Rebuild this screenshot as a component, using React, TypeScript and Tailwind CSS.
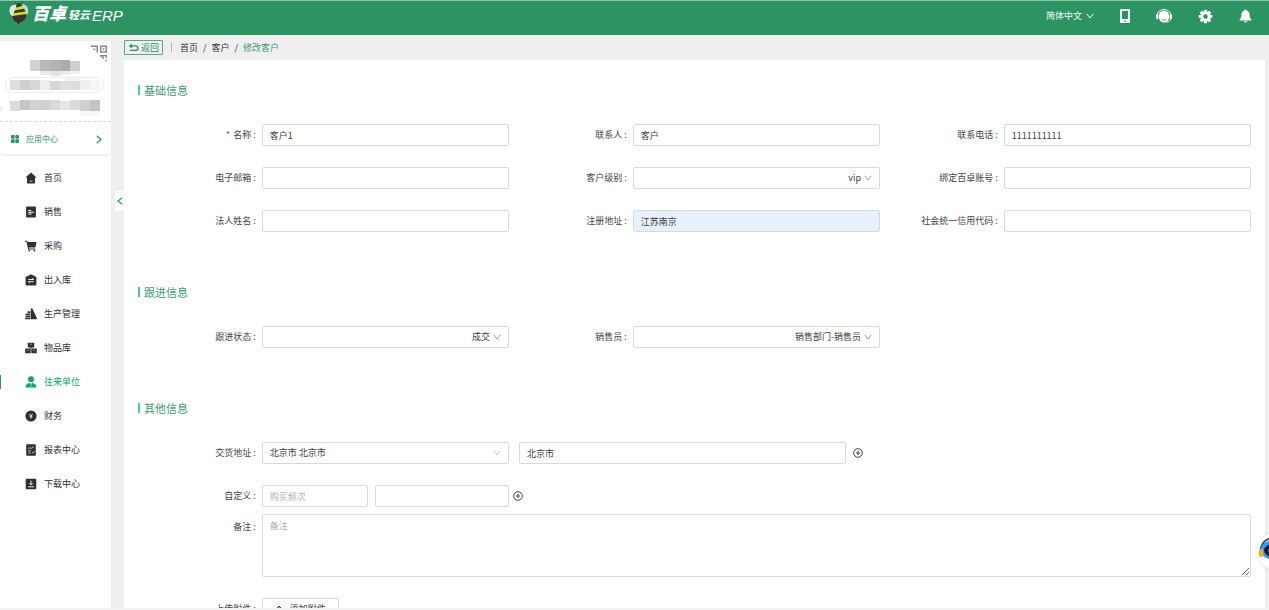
import React from 'react';

type IconProps = { className?: string };

/* ---------- Icons ---------- */

function Chevron({ className = '' }: IconProps) {
  return (
    <svg viewBox="0 0 8 6" className={className} fill="none" stroke="currentColor" strokeWidth="1" aria-hidden="true">
      <path d="M0.8 0.8 4 5 7.2 0.8" />
    </svg>
  );
}

function BeeLogo() {
  return (
    <svg viewBox="0 0 22 26" className="h-[25px] w-[22px] shrink-0" aria-hidden="true">
      <path d="M9 3.2 6.600 0.800M13 2.600 15 0.400" stroke="#333" strokeWidth="0.900" fill="none" />
      <path d="M8 4C3 3.500 0.300 7 1.200 11.500c.4 2.600 2 4 3.800 4.300L9 7Z" fill="#dfe8e4" />
      <path d="M14 3c4.500.3 7 3.600 6.600 8-.2 2.400-1.200 3.800-2.800 4.200L12 6Z" fill="#c9d6d0" />
      <path d="M10.800 2.400c2 0 3.200 1 3.800 2.600L8 7c0-2.600 1-4.600 2.800-4.600Z" fill="#33352f" />
      <path d="M7.600 7.200 14.600 5l1.600 3.400-9.600 1.900Z" fill="#d3df1b" />
      <path d="m6.500 10 9.900-1.900 1.400 3L5.400 13Z" fill="#33352f" />
      <path d="m5.200 12.800 12.800-2 .6 3.200L4.400 16Z" fill="#d3df1b" />
      <path d="M4.300 15.700 18.700 13.500c.4 5-3.200 7.800-6.600 8.600L10 25l-.6-2.700c-3.200-.6-5.400-3.200-5.100-6.600Z" fill="#3a3229" />
    </svg>
  );
}

function PhoneIcon() {
  return (
    <svg viewBox="0 0 10 14" className="h-[14px] w-[10px]" fill="currentColor" aria-hidden="true">
      <path fillRule="evenodd" d="M1 0h8q1 0 1 1v12q0 1-1 1H1q-1 0-1-1V1Q0 0 1 0ZM2 2v8h6V2ZM4 11.400v1.200h2v-1.200Z" />
    </svg>
  );
}

function ServiceIcon() {
  return (
    <svg viewBox="0 0 16 14" className="h-[14px] w-[16px]" fill="currentColor" aria-hidden="true">
      <path d="M1.200 6.500C1.400 2.600 4.400.6 8 .6s6.600 2 6.800 5.900" fill="none" stroke="currentColor" strokeWidth="1" />
      <rect x="0" y="5.300" width="2.200" height="4.900" rx="1" />
      <rect x="13.800" y="5.300" width="2.200" height="4.900" rx="1" />
      <path d="M8 1.800c3.200 0 5.300 2.200 5.300 5.400 0 3.600-2.200 6.300-5.300 6.300S2.700 10.800 2.700 7.200 4.800 1.800 8 1.800Z" />
      <path d="M5.800 10.300c1.300.9 3.100.9 4.400 0" fill="none" stroke="#2b9462" strokeWidth="0.800" />
      <path d="M14.700 10c-.7 1.800-2.200 3-4.200 3.400" fill="none" stroke="currentColor" strokeWidth="0.900" />
    </svg>
  );
}

function GearIcon() {
  return (
    <svg viewBox="0 0 16 16" className="h-[15px] w-[15px]" aria-hidden="true">
      <g fill="currentColor">
        <rect x="6.300" y="0.800" width="3.400" height="14.400" rx="0.600" />
        <rect x="6.300" y="0.800" width="3.400" height="14.400" rx="0.600" transform="rotate(45 8 8)" />
        <rect x="6.300" y="0.800" width="3.400" height="14.400" rx="0.600" transform="rotate(90 8 8)" />
        <rect x="6.300" y="0.800" width="3.400" height="14.400" rx="0.600" transform="rotate(135 8 8)" />
        <circle cx="8" cy="8" r="5.300" />
      </g>
      <circle cx="8" cy="8" r="2.400" fill="#2b9462" />
    </svg>
  );
}

function BellIcon() {
  return (
    <svg viewBox="0 0 14 15" className="h-[14px] w-[13px]" fill="currentColor" aria-hidden="true">
      <path d="M7 0.500c.7 0 1.100.5 1.100 1.200C10.300 2.200 11.400 4 11.400 6c0 3 .6 4 1.800 5.200.4.500.2 1.100-.4 1.100H1.200c-.6 0-.8-.6-.4-1.100C2 10 2.600 9 2.600 6c0-2 1.100-3.800 3.300-4.300C5.900 1 6.300.5 7 .5ZM5.200 13h3.600c-.2.900-.9 1.500-1.800 1.500S5.400 13.900 5.200 13Z" />
    </svg>
  );
}

function QrCorner() {
  return (
    <svg viewBox="0 0 16 17" className="h-[17px] w-[16px]" aria-hidden="true">
      <g fill="none" stroke="#858585" strokeWidth="1.400">
        <path d="M0 1.200h6.300v6.300" />
        <rect x="9.700" y="1.200" width="5.600" height="5.800" />
        <path d="M9 10.600h6.400v2.500M12 10.500v3.500" />
      </g>
      <g fill="#858585">
        <rect x="2.500" y="3.500" width="1.800" height="1.500" />
        <rect x="11.700" y="3.300" width="1.600" height="1.600" />
        <rect x="9.300" y="11" width="1.200" height="1.500" />
        <rect x="14.300" y="14.800" width="1.500" height="1.500" />
      </g>
    </svg>
  );
}

function BackIcon() {
  return (
    <svg viewBox="0 0 12 10" className="h-[9px] w-[11px]" aria-hidden="true">
      <path d="M4.500 0.500v5.400L0.600 3.200Z" fill="currentColor" />
      <path d="M3 3.200h5.200c1.700 0 2.700 1 2.700 2.500s-1 2.500-2.700 2.500H2" fill="none" stroke="currentColor" strokeWidth="1.500" />
    </svg>
  );
}

function PlusCircle() {
  return (
    <svg viewBox="0 0 10 10" className="h-[10px] w-[10px]" fill="none" stroke="#444" strokeWidth="1" aria-hidden="true">
      <circle cx="5" cy="5" r="4.300" />
      <path d="M5 2.900v4.200M2.900 5h4.200" />
    </svg>
  );
}

const menuIcons: Record<string, React.ReactNode> = {
  home: <path d="M6 .4 11.600 5.600H10v5.200q0 .7-.7.7H2.700q-.7 0-.7-.7V5.600H.4ZM4.600 8.700v.8h2.800v-.8Z" fillRule="evenodd" />,
  sales: <path d="M2 .6h8q.9 0 .9.900v9q0 .9-.9.900H2q-.9 0-.9-.9v-9Q1.100.6 2 .6ZM3.200 4v.9h3V4Zm0 1.800v.9h5.600v-.9Zm0 1.800v.9h3.400v-.9Z" fillRule="evenodd" />,
  cart: (
    <>
      <path d="M0 .8h2.200l.4 1.200h9L10.400 7.600H3.900l.2 1h6.200v.9H3.200L1.500 1.700H0Z" />
      <circle cx="4.200" cy="10.600" r="0.900" />
      <circle cx="9.400" cy="10.600" r="0.900" />
    </>
  ),
  warehouse: (
    <>
      <path d="M6 .3 11.400 3v7.600q0 .9-.9.900h-9q-.9 0-.9-.9V3Z" />
      <path d="M3.300 5.500h5.400L7.300 4.200M8.700 7.700H3.300L4.700 9" fill="none" stroke="#fff" strokeWidth="0.900" />
    </>
  ),
  production: (
    <>
      <path d="M5.800.5h1.600l4.300 9.300v1.500H5.800Z" />
      <path d="M.6 5.400h4.800v1.500H.6Zm0 2h4.800V9H.6Zm-.4 2.200h5.200v1.700H.2ZM2.600 3.200h2.800v1.700H2.600Z" />
    </>
  ),
  goods: (
    <>
      <rect x="2.800" y="0.800" width="6.400" height="4.700" rx="0.500" />
      <rect x="0.200" y="6.500" width="5.500" height="4.700" rx="0.500" />
      <rect x="6.300" y="6.500" width="5.500" height="4.700" rx="0.500" />
      <path d="M5.500 5h1v1.800h-1Z" />
      <path d="M5 2.200h2M2 8.300h1.800M8.200 8.300H10" stroke="#fff" strokeWidth="0.500" />
    </>
  ),
  partner: (
    <>
      <circle cx="6" cy="3.200" r="2.900" />
      <path d="M.6 11.500c0-2.800 1.600-4.300 4-4.600L6 8l1.400-1.100c2.400.3 4 1.800 4 4.600Z" />
      <path d="M6 8.200v2.300" stroke="#fff" strokeWidth="0.600" />
    </>
  ),
  finance: (
    <>
      <circle cx="6" cy="6" r="5.600" />
      <path d="M4.400 3.800 6 5.700l1.600-1.900M6 5.700v3M4.500 6.200h3" fill="none" stroke="#fff" strokeWidth="0.900" />
    </>
  ),
  report: (
    <>
      <path d="M2 .3h8q.8 0 .8.800v9.800q0 .8-.8.800H2q-.8 0-.8-.8V1.100Q1.200.3 2 .3Z" />
      <path d="m3.200 4.600 1.800-1 1.200.9 2.600-2M3.200 6.800h2.600M3.200 8.900h2.600M7.200 8.200l.9.900 1.500-1.900" fill="none" stroke="#fff" strokeWidth="0.700" />
    </>
  ),
  download: (
    <>
      <rect x="0.700" y="0.700" width="10.600" height="10.600" rx="1" />
      <path d="M6 2.600v4M4.400 5.200 6 6.800l1.600-1.600M3 8.800h6" fill="none" stroke="#fff" strokeWidth="0.900" />
    </>
  ),
};

const menu = [
  { label: '首页', icon: 'home' },
  { label: '销售', icon: 'sales' },
  { label: '采购', icon: 'cart' },
  { label: '出入库', icon: 'warehouse' },
  { label: '生产管理', icon: 'production' },
  { label: '物品库', icon: 'goods' },
  { label: '往来单位', icon: 'partner', active: true },
  { label: '财务', icon: 'finance' },
  { label: '报表中心', icon: 'report' },
  { label: '下载中心', icon: 'download' },
];

/* ---------- Masked account details ---------- */

function MaskedAccount() {
  const cells: [number, number, number, number, string][] = [
    [30, 0, 10, 11, '#d2d2d2'], [40, 0, 10, 11, '#b9b9b9'], [50, 0, 11, 11, '#b5b3b2'], [61, 0, 9, 11, '#a9adaf'],
    [70, 1, 10, 10, '#cfcfcf'], [40, 11, 10, 4, '#ececec'], [50, 11, 10, 5, '#e3e3e3'], [60, 11, 10, 4, '#ebebeb'], [70, 11, 10, 3, '#f2f2f2'],
    [10, 20, 10, 10, '#dedede'], [20, 20, 10, 10, '#cfcfd0'], [30, 20, 10, 10, '#d8d8d8'], [40, 20, 10, 10, '#f0eeed'],
    [50, 21, 10, 9, '#d6d7d8'], [60, 21, 10, 9, '#e0e0e0'], [70, 20, 10, 10, '#dcdedf'], [80, 20, 10, 10, '#efefef'], [90, 20, 10, 10, '#f6f6f6'],
    [65, 16, 16, 5, '#f1f2f2'],
    [10, 41, 10, 10, '#dcdcdc'], [20, 40, 10, 10, '#c6c6c7'], [30, 40, 10, 10, '#d3d3d3'], [40, 40, 10, 10, '#d0d0d0'], [50, 40, 10, 10, '#dadada'],
    [60, 41, 10, 9, '#e8e6e4'], [70, 40, 10, 10, '#dadada'], [80, 40, 10, 11, '#d0d0d0'], [90, 40, 10, 11, '#c6c4c1'],
    [80, 51, 20, 5, '#f7f7f7'],
  ];
  return (
    <svg viewBox="0 0 111 58" className="h-[58px] w-[111px]" aria-hidden="true">
      <rect x="5.500" y="17.500" width="98" height="15" rx="7.500" fill="#fff" stroke="#ececec" />
      {cells.map(([x, y, w, h, fill]) => (
        <rect key={`${x}-${y}`} x={x} y={y} width={w} height={h} fill={fill} />
      ))}
      <circle cx="0" cy="49" r="2.500" fill="#eeeeee" />
    </svg>
  );
}

/* ---------- Form parts ---------- */

const control =
  'h-[22px] w-full min-w-0 rounded-[2px] border border-[#d9d9d9] bg-white px-[7px] text-[9px] text-[#404040] outline-none placeholder:text-[#b0b0b0] focus:border-[#2b9462]';

function Label({ htmlFor, required, children }: { htmlFor: string; required?: boolean; children: React.ReactNode }) {
  return (
    <label htmlFor={htmlFor} className="flex h-[22px] items-center justify-end whitespace-nowrap pr-[6px] text-[#444]">
      {required && <span className="pr-[3px] text-[#f5222d]">*</span>}
      <span>{children}</span>
      <span className="pl-[2px]">:</span>
    </label>
  );
}

type FieldProps = { id: string; label: string; value?: string; required?: boolean; filled?: boolean };

function TextField({ id, label, value = '', required, filled }: FieldProps) {
  return (
    <>
      <Label htmlFor={id} required={required}>{label}</Label>
      <div className="col-span-2">
        <input id={id} type="text" defaultValue={value} className={filled ? `${control} bg-[#e8f0fe]!` : control} />
      </div>
    </>
  );
}

function SelectBox({ id, value, left, label }: { id: string; value: string; left?: boolean; label?: string }) {
  return (
    <div className="relative col-span-2">
      <select
        id={id}
        aria-label={label}
        defaultValue={value}
        className={`${control} appearance-none pr-[18px]! ${left ? '' : '[text-align-last:right]'}`}
      >
        <option>{value}</option>
      </select>
      <Chevron className={`pointer-events-none absolute right-[8px] top-[8px] h-[6px] w-[8px] ${left ? 'text-[#c8c8c8]' : 'text-[#999]'}`} />
    </div>
  );
}

function SelectField({ id, label, value }: { id: string; label: string; value: string }) {
  return (
    <>
      <Label htmlFor={id}>{label}</Label>
      <SelectBox id={id} value={value} />
    </>
  );
}

function Section({ title, children }: { title: string; children: React.ReactNode }) {
  return (
    <section>
      <h2 className="mb-[26px] flex h-4 items-center gap-1 text-[11px] text-[#3c9c72]">
        <span className="h-[10px] w-[2px] bg-[#45cf8b]" />
        {title}
      </h2>
      {children}
    </section>
  );
}

/* ---------- Page regions ---------- */

function Header() {
  return (
    <header className="flex h-[35px] shrink-0 items-start justify-between border-t border-[#8fc4aa] bg-[#2b9462] pl-[8px] pr-[17px] text-white">
      <a href="#home" className="flex items-center gap-[2px]">
        <BeeLogo />
        <span className="flex items-center italic leading-none">
          <span className="pb-[3px] text-[17px] font-black">百卓</span>
          <span className="pl-[2px] pt-px text-[11px] font-bold">轻云</span>
          <span className="pl-[2px] pt-[3px] font-['Liberation_Sans'] text-[15px]">ERP</span>
        </span>
      </a>
      <nav className="flex h-[30px] items-center gap-[26px]">
        <button type="button" className="flex items-center gap-[4px] text-[9px]">
          简体中文
          <Chevron className="h-[6px] w-[8px]" />
        </button>
        <button type="button" aria-label="手机版"><PhoneIcon /></button>
        <button type="button" aria-label="客服"><ServiceIcon /></button>
        <button type="button" aria-label="设置"><GearIcon /></button>
        <button type="button" aria-label="通知"><BellIcon /></button>
      </nav>
    </header>
  );
}

function Sidebar() {
  return (
    <aside className="w-[111px] shrink-0 bg-white">
      <div className="relative h-[81px] border-b border-dashed border-[#d4d4d4] pt-[19px]">
        <MaskedAccount />
        <button type="button" aria-label="二维码" className="absolute right-[4px] top-[4px]"><QrCorner /></button>
      </div>
      <a href="#apps" className="flex h-[34px] items-center rounded-b-[4px] border-b-2 border-[#f0f0f0] pl-[11px] pr-[9px] pt-[2px] text-[8px] text-[#2b9462]">
        <svg viewBox="0 0 8 8" className="mr-[7px] h-[8px] w-[8px]" fill="currentColor" aria-hidden="true">
          <rect width="3.700" height="3.700" rx="0.900" />
          <rect x="4.300" width="3.700" height="3.700" rx="0.900" />
          <rect y="4.300" width="3.700" height="3.700" rx="0.900" />
          <rect x="4.300" y="4.300" width="3.700" height="3.700" rx="0.900" />
        </svg>
        <span className="flex-1">应用中心</span>
        <svg viewBox="0 0 6 9" className="h-[9px] w-[6px]" fill="none" stroke="currentColor" strokeWidth="1.200" aria-hidden="true">
          <path d="m0.800 0.800 4.200 3.700L0.800 8.200" />
        </svg>
      </a>
      <ul className="pt-[5px] text-[9px]">
        {menu.map((item) => (
          <li key={item.label}>
            <a
              href={`#${item.icon}`}
              className={`flex h-[34px] items-center gap-[7px] pl-[25px] ${item.active ? 'text-[#0cab69]' : 'text-[#303030]'}`}
            >
              {item.active && <span className="-ml-[25px] mr-[17px] h-[14px] w-px bg-[#2b9462]" />}
              <svg viewBox="0 0 12 12" className="h-[12px] w-[12px] shrink-0" fill="currentColor" aria-hidden="true">
                {menuIcons[item.icon]}
              </svg>
              {item.label}
            </a>
          </li>
        ))}
      </ul>
    </aside>
  );
}

function Breadcrumb() {
  return (
    <div className="flex h-[25px] shrink-0 items-center text-[9px] text-[#333]">
      <button type="button" className="flex h-[15px] items-center gap-[2px] rounded-[1px] border border-[#58aa84] px-[3px] text-[#2b9462]">
        <BackIcon />
        返回
      </button>
      <span className="mx-[8px] h-[9px] w-px bg-[#bdb5a8]" />
      <nav className="flex items-center gap-[5px]">
        <a href="#home">首页</a>
        <span>/</span>
        <a href="#customers">客户</a>
        <span>/</span>
        <span className="text-[#3c9c72]">修改客户</span>
      </nav>
    </div>
  );
}

function CustomerForm() {
  return (
    <form className="flex flex-col gap-[52px] px-[14px] pb-8 pt-[22px] text-[9px]">
      <Section title="基础信息">
        <div className="grid grid-cols-9 gap-y-[21px]">
          <TextField id="name" label="名称" value="客户1" required />
          <TextField id="contact" label="联系人" value="客户" />
          <TextField id="phone" label="联系电话" value="1111111111" />
          <TextField id="email" label="电子邮箱" />
          <SelectField id="level" label="客户级别" value="vip" />
          <TextField id="account" label="绑定百卓账号" />
          <TextField id="legal" label="法人姓名" />
          <TextField id="address" label="注册地址" value="江苏南京" filled />
          <TextField id="credit" label="社会统一信用代码" />
        </div>
      </Section>

      <Section title="跟进信息">
        <div className="grid grid-cols-9">
          <SelectField id="status" label="跟进状态" value="成交" />
          <SelectField id="seller" label="销售员" value="销售部门-销售员" />
        </div>
      </Section>

      <Section title="其他信息">
        <div className="grid grid-cols-9">
          <Label htmlFor="region">交货地址</Label>
          <SelectBox id="region" value="北京市 北京市" left />
          <div className="col-span-3 flex items-center gap-[7px] pl-[10px] pr-[17px]">
            <input type="text" aria-label="详细地址" defaultValue="北京市" className={control} />
            <button type="button" aria-label="添加地址"><PlusCircle /></button>
          </div>
        </div>
        <div className="mt-[21px] grid grid-cols-9">
          <Label htmlFor="custom-name">自定义</Label>
          <div className="col-span-2 grid grid-cols-[4fr_5fr] gap-[7px]">
            <input id="custom-name" type="text" placeholder="购买频次" className={control} />
            <input type="text" aria-label="自定义内容" className={control} />
          </div>
          <button type="button" aria-label="添加自定义" className="ml-[4px] justify-self-start"><PlusCircle /></button>
        </div>
        <div className="mt-[7px] grid grid-cols-9">
          <div className="pt-[2px]"><Label htmlFor="remark">备注</Label></div>
          <textarea id="remark" placeholder="备注" className={`${control} col-span-8 h-[63px]! py-[4px] leading-[13px]`} />
        </div>
        <div className="mt-[21px] grid grid-cols-9">
          <Label htmlFor="upload">上传附件</Label>
          <div className="col-span-2">
            <button id="upload" type="button" className="flex h-[22px] items-center gap-[7px] rounded-[2px] border border-[#d9d9d9] px-[12px] text-[#404040]">
              <svg viewBox="0 0 8 9" className="h-[9px] w-[8px]" fill="none" stroke="currentColor" strokeWidth="1" aria-hidden="true">
                <path d="M4 7V1M2 3l2-2 2 2M0.500 6v2.500h7V6" />
              </svg>
              添加附件
            </button>
          </div>
        </div>
      </Section>
    </form>
  );
}

function Assistant() {
  return (
    <button type="button" aria-label="智能助手" className="fixed -right-6 bottom-[41px] h-9 w-9 rounded-full bg-white shadow-[0_0_4px_rgba(0,0,0,0.12)]">
      <svg viewBox="0 0 36 36" className="h-9 w-9" aria-hidden="true">
        <path d="M3.500 17C5 8 11 5 18 5s13 4 14 12" fill="none" stroke="#4a5261" strokeWidth="2" />
        <ellipse cx="18" cy="17" rx="14.500" ry="10" fill="#2f9df4" />
        <ellipse cx="18" cy="17.500" rx="11" ry="7" fill="#121a30" />
        <ellipse cx="12" cy="17.500" rx="1" ry="2" fill="#3f78b0" />
        <ellipse cx="4" cy="20" rx="2.300" ry="4" fill="#f7a823" />
      </svg>
    </button>
  );
}

export default function App() {
  return (
    <div className="flex h-screen flex-col overflow-hidden bg-[#efefef] font-['Noto_Sans_CJK_SC',sans-serif]">
      <Header />
      <div className="flex min-h-0 flex-1">
        <div className="flex pt-[6px]"><Sidebar /></div>
        <div className="flex w-[13px] shrink-0 justify-end pt-[156px]">
          <button type="button" aria-label="收起菜单" className="flex h-[20px] w-[9px] items-center justify-center bg-white text-[#2b9462]">
            <svg viewBox="0 0 6 8" className="h-[8px] w-[6px]" fill="none" stroke="currentColor" strokeWidth="1.100" aria-hidden="true">
              <path d="M5.200 0.800 0.900 4l4.300 3.200" />
            </svg>
          </button>
        </div>
        <main className="flex min-w-0 flex-1 flex-col pr-[4px]">
          <Breadcrumb />
          <div className="min-h-0 flex-1 overflow-y-auto bg-white [scrollbar-width:none]">
            <CustomerForm />
          </div>
        </main>
      </div>
      <div className="h-[2px] shrink-0 bg-[#f3f3f3]" />
      <Assistant />
    </div>
  );
}
